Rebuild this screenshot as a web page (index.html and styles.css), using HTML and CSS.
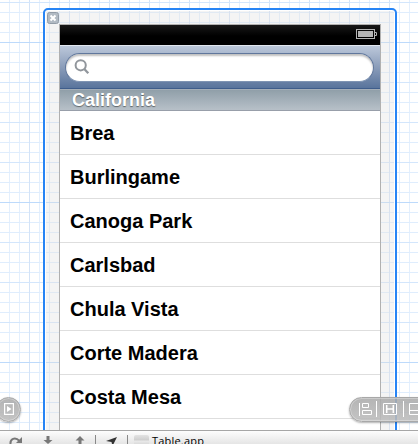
FILE: index.html
```html
<!DOCTYPE html>
<html lang="en">
<head>
<meta charset="utf-8">
<title>Table</title>
<link rel="stylesheet" href="styles.css">
</head>
<body>
<main class="canvas">
  <section class="selection">
    <button class="close" aria-label="Close"><svg width="12" height="12" viewBox="0 0 12 12"><rect x=".5" y=".5" width="11" height="11" rx="2" fill="#b1bac3" stroke="#929ca7"/><path d="M3.500 3.500l5 5m0-5l-5 5" stroke="#fff" stroke-width="2"/></svg></button>
    <div class="device">
      <div class="status"><svg width="22" height="11" viewBox="0 0 22 11"><rect x=".5" y=".5" width="18" height="9" fill="none" stroke="#b5b5b5"/><rect x="2" y="2" width="15" height="6" fill="#b5b5b5"/><path d="M19 3.500h1.500v3H19" fill="none" stroke="#b5b5b5"/></svg></div>
      <div class="search"><div class="field"><svg width="16" height="16" viewBox="0 0 16 16" fill="none" stroke="#91969c" stroke-width="2"><circle cx="6.700" cy="6.300" r="5.100"/><path d="M10.300 10l4 4.200" stroke-width="2.300"/></svg></div></div>
      <h1 class="header">California</h1>
      <ul class="rows">
        <li>Brea</li>
        <li>Burlingame</li>
        <li>Canoga Park</li>
        <li>Carlsbad</li>
        <li>Chula Vista</li>
        <li>Corte Madera</li>
        <li>Costa Mesa</li>
        <li></li>
      </ul>
    </div>
  </section>
  <div class="pill pill-left"><svg width="10" height="12" viewBox="0 0 10 12"><rect x=".6" y=".6" width="8.800" height="10.800" fill="none" stroke="#fff" stroke-width="1.200"/><path d="M3 3l4.500 3L3 9z" fill="#fff"/></svg></div>
  <div class="pill pill-right"><svg width="69" height="24" viewBox="0 0 69 24" fill="none" stroke="#fff"><path d="M9.500 5v13M26.500 3v16M53.500 3v16"/><path d="M12.500 5.500h6v4h-6zM12.500 12.500h9v4h-9z"/><path d="M33.500 5.500h13v11h-13z"/><path d="M36.700 7v8M43.300 8v7M43.300 7v2M37 11h6" stroke-width="1.500"/><path d="M59.500 5.500h12v11h-12zM59.500 12.500h10"/></svg></div>
</main>
<footer class="toolbar">
  <svg class="tools" width="134" height="13" viewBox="0 0 134 13">
    <path d="M10.500 13c-.5-5 4.500-7.500 9-3" fill="none" stroke="#777" stroke-width="2"/><path d="M22 6v6h-6z" fill="#777"/>
    <path d="M46.500 5h3v4h3L48 13l-4.500-4h3z" fill="#777"/>
    <path d="M80 5l4.500 4.500h-3V13h-3V9.500h-3z" fill="#777"/>
    <path d="M95.500 4v9M127.500 4v9" stroke="#888"/>
    <path d="M117 6l-4.500 9-1-4-5.500-1z" fill="#333"/>
  </svg>
  <span class="app-icon"></span>
  <span class="app">Table.app</span>
</footer>
</body>
</html>
```
FILE: styles.css
```css
* { box-sizing: border-box; }
body {
  margin: 0;
  width: 418px;
  height: 444px;
  overflow: hidden;
  display: flex;
  flex-direction: column;
  background: #fff;
  font-family: "Liberation Sans", Arial, sans-serif;
}
.canvas {
  position: relative;
  flex: 0 0 430px;
  overflow: hidden;
  padding: 8px 0 0 43px;
  background-image:
    linear-gradient(#bddafb 1px, transparent 1px),
    linear-gradient(#d3e6fc 1px, transparent 1px),
    linear-gradient(90deg, #d3e3f7 1px, transparent 1px),
    linear-gradient(#dfedfd 1px, transparent 1px),
    linear-gradient(90deg, #e3effd 1px, transparent 1px);
  background-size: 160px 160px, 40px 40px, 40px 40px, 10px 10px, 10px 10px;
  background-position: 0 42px, 0 2px, 29px 0, 0 2px, 9px 0;
}
.selection {
  position: relative;
  width: 354px;
  height: 450px;
  padding: 14px;
  border: 2px solid #2684f5;
  border-radius: 5px;
  background: rgba(225, 225, 225, .38);
  box-shadow: inset 0 0 0 1px #fff;
}
.close {
  position: absolute;
  left: 2px;
  top: 2px;
  padding: 0;
  border: 0;
  background: none;
  line-height: 0;
}
.device {
  width: 322px;
  height: 440px;
  border: 1px solid #b0b0b0;
  background: #fff;
}
.status {
  height: 20px;
  display: flex;
  justify-content: flex-end;
  padding: 4px 2px 0 0;
  background: linear-gradient(#181818, #000 55%);
}
.search {
  height: 44px;
  padding: 7px 6px 7px 5px;
  border-top: 1px solid #e3e8f0;
  border-bottom: 1px solid #3f5d8b;
  background: linear-gradient(#bcc8da, #8b9dba 50%, #59749c);
}
.field {
  height: 29px;
  padding: 5px 0 0 8px;
  border: 1px solid #60779c;
  border-bottom-color: #7f94b3;
  border-radius: 15px;
  background: #fff;
  box-shadow: inset 0 2px 2px rgba(0, 0, 0, .25);
  line-height: 0;
}
.header {
  margin: 0;
  height: 22px;
  padding-left: 12px;
  border-top: 1px solid #a3adb7;
  border-bottom: 1px solid #989faa;
  background: linear-gradient(#909fa9, #b7c0c8);
  color: #fff;
  font-size: 18px;
  line-height: 21px;
  text-shadow: 0 1px 1px rgba(0, 0, 0, .45);
}
.rows {
  margin: 0;
  padding: 0;
  list-style: none;
}
.rows li {
  height: 44px;
  padding-left: 10px;
  border-bottom: 1px solid #dedede;
  font-size: 20px;
  font-weight: bold;
  line-height: 44px;
  color: #000;
}
.pill {
  position: absolute;
  border: 1px solid #a8a8a8;
  background: linear-gradient(rgba(170, 170, 170, .88), rgba(188, 188, 188, .88));
  box-shadow: inset 0 0 0 1px rgba(255, 255, 255, .3), 0 1px 2px rgba(0, 0, 0, .3);
  line-height: 0;
}
.pill-left {
  left: -4px;
  top: 397px;
  width: 25px;
  height: 25px;
  border-radius: 50%;
  padding: 5px 0 0 7px;
}
.pill-right {
  left: 349px;
  top: 397px;
  width: 90px;
  height: 25px;
  border-radius: 13px;
}
.toolbar {
  flex: 0 0 14px;
  display: flex;
  overflow: hidden;
  border-top: 1px solid #a6a6a6;
  background: linear-gradient(#fdfdfd, #e5e5e5);
}
.tools { flex: none; }
.app-icon {
  width: 15px;
  height: 13px;
  margin-top: 4px;
  border-radius: 2px 2px 0 0;
  background: linear-gradient(#e3e3e3, #cecece 5px, #e9e9e9 6px, #c8c8c8);
}
.app {
  margin: 3px 0 0 3px;
  font: 11px/14px "Open Sans", "Noto Sans", sans-serif;
  letter-spacing: .2px;
  color: #000;
}
```
